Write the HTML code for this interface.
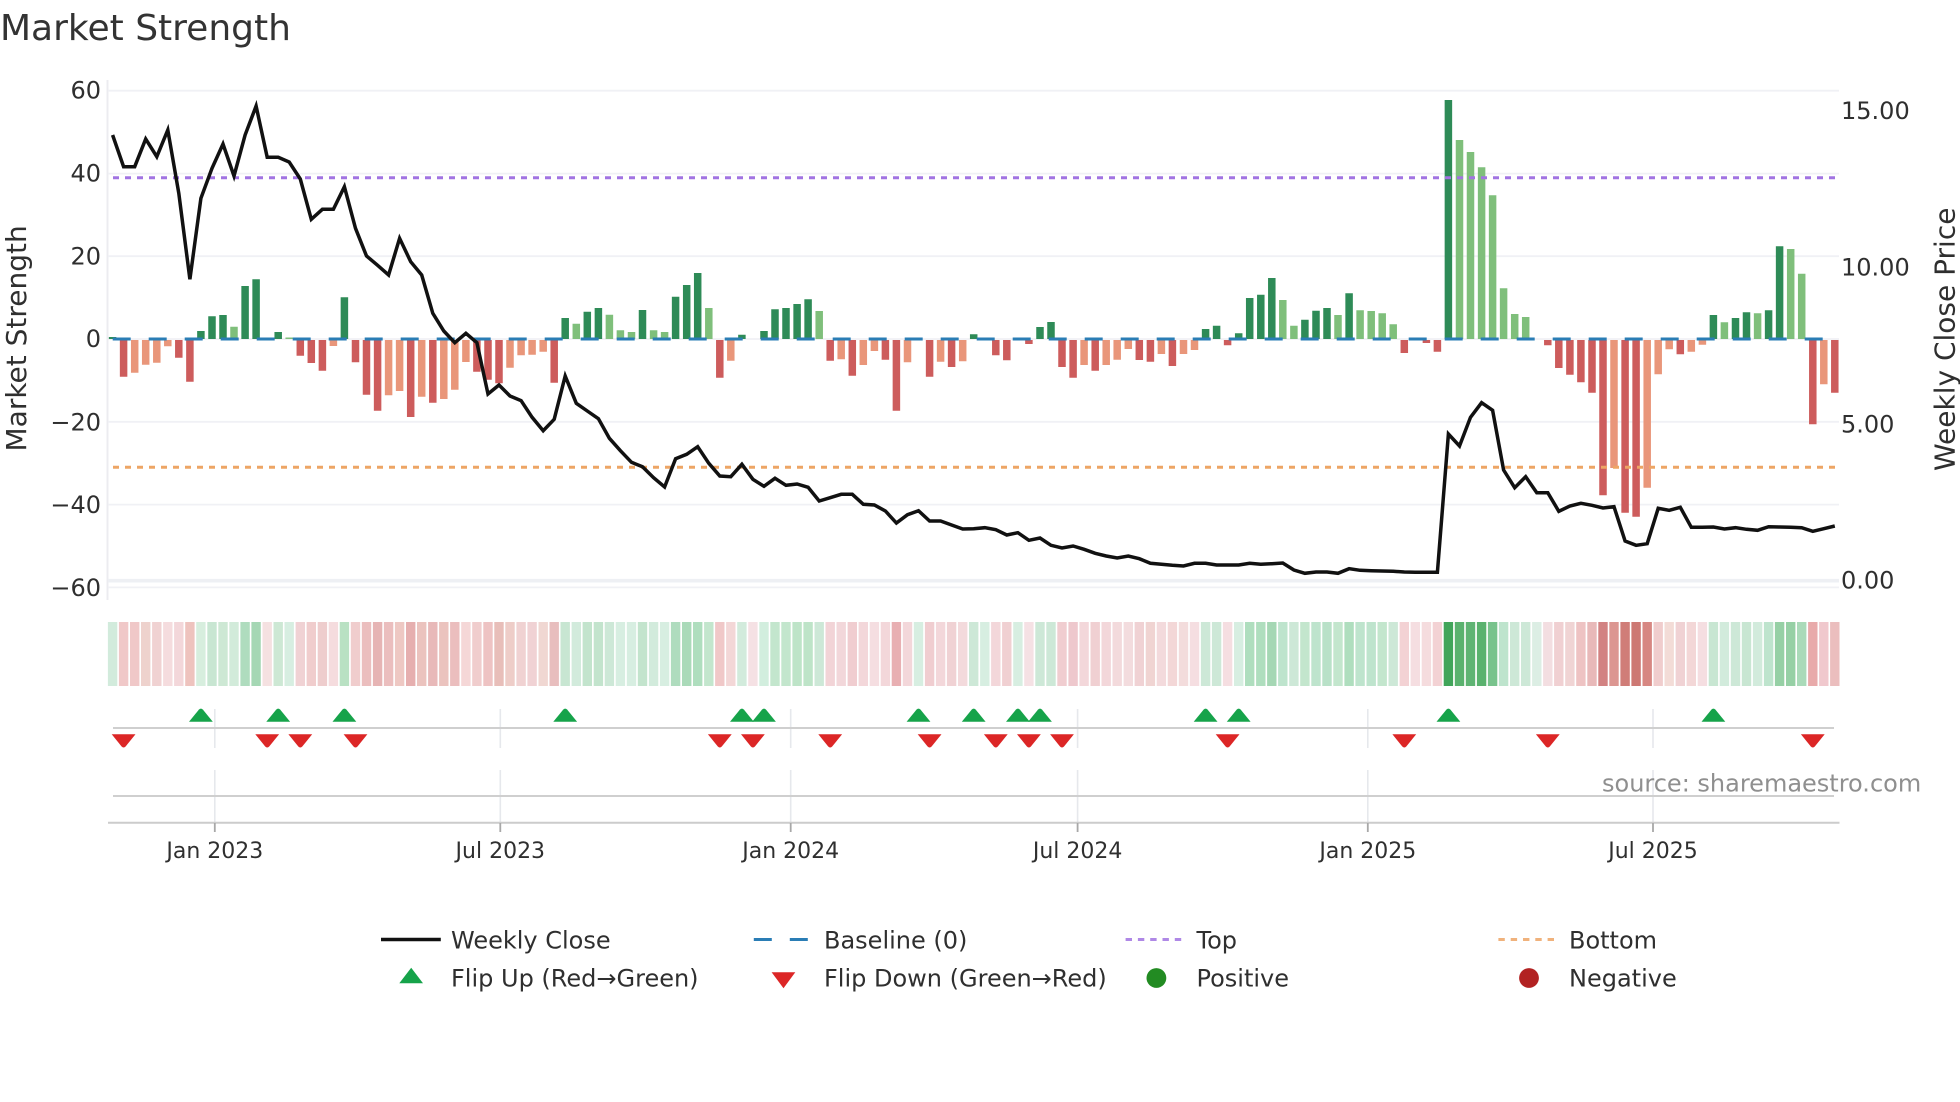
<!DOCTYPE html>
<html lang="en"><head><meta charset="utf-8"><title>Market Strength</title>
<style>
html,body{margin:0;padding:0;background:#fff;width:1960px;height:1102px;overflow:hidden}
svg{display:block}
text{font-family:"DejaVu Sans","Liberation Sans",sans-serif;fill:#2f2f2f}
.yt{font-size:24px;text-anchor:end}
.rt{font-size:24px}
.xt{font-size:22px;text-anchor:middle}
.lg{font-size:24px}
</style></head><body>
<svg width="1960" height="1102" viewBox="0 0 1960 1102" xmlns="http://www.w3.org/2000/svg">
<defs>
<path id="u" d="M-11.9 721.7L-2 709.6Q0 707.6 2 709.6L11.9 721.7Z" fill="#16a34a"/>
<path id="d" d="M-11.9 734.3H11.9L2 746.5Q0 748.4-2 746.5Z" fill="#dc2626"/>
</defs>
<text x="0" y="40" style="font-size:36px;fill:#333">Market Strength</text>
<!-- grid -->
<path d="M107.5 80V600" stroke="#ececf0" stroke-width="2" fill="none"/>
<path d="M108 90.7H1839M108 173.6H1839M108 256.2H1839M108 339H1839M108 421.8H1839M108 504.6H1839M108 587.4H1839" stroke="#f0f1f5" stroke-width="1.8" fill="none"/>
<path d="M108 580.7H1839" stroke="#eef0f4" stroke-width="3.6" fill="none"/>
<!-- bars -->
<g fill="none" stroke-width="7.5">
<path stroke="#2e8b57" d="M112.6 339V337M200.9 339V331M212 339V316.3M223 339V315M245.1 339V286M256.1 339V279.3M278.2 339V332M344.4 339V297.3M565.2 339V318M587.3 339V311.7M598.4 339V308M642.5 339V310M675.6 339V296.7M686.7 339V285M697.7 339V273M741.9 339V334.7M764 339V331M775 339V309.3M786 339V308M797.1 339V304M808.1 339V299.3M973.7 339V334.3M1017.9 339V337.5M1040 339V327M1051 339V322M1205.6 339V329M1216.6 339V325.7M1238.7 339V333.3M1249.7 339V298M1260.8 339V294.7M1271.8 339V278M1304.9 339V319.7M1316 339V310.7M1327 339V308M1349.1 339V293.3M1448.4 339V100M1713.4 339V315M1735.5 339V318M1746.5 339V312.3M1768.6 339V310.3M1779.6 339V246.3"/>
<path stroke="#7fbf7b" d="M234 339V326.7M289.2 339V337.5M576.3 339V323.7M609.4 339V314.7M620.4 339V330.3M631.5 339V332M653.6 339V330.3M664.6 339V332M708.8 339V308M819.2 339V311M1282.8 339V300M1293.9 339V325.7M1338 339V315M1360.1 339V310.3M1371.2 339V311M1382.2 339V313.3M1393.2 339V324.3M1459.5 339V140M1470.5 339V152M1481.6 339V167.3M1492.6 339V195.3M1503.6 339V288.3M1514.7 339V314M1525.7 339V317M1724.4 339V322.3M1757.6 339V313.3M1790.7 339V249M1801.7 339V273.7"/>
<path stroke="#cd5c5c" d="M123.6 340V376.7M178.8 340V357.7M189.9 340V381.7M300.3 340V355.7M311.3 340V363M322.4 340V370.7M355.5 340V362.3M366.5 340V394.7M377.6 340V410.7M410.7 340V417M432.8 340V402.7M476.9 340V371.7M488 340V379.7M499 340V383.3M554.2 340V382.7M719.8 340V377.7M830.2 340V360.7M852.3 340V375.7M885.4 340V359.7M896.4 340V410.7M929.6 340V376.7M951.6 340V367M995.8 340V355.3M1006.8 340V360.3M1028.9 340V344M1062 340V367M1073.1 340V377.7M1095.2 340V370.7M1139.3 340V360M1150.4 340V361.7M1172.4 340V366M1227.6 340V345.3M1404.3 340V353M1426.4 340V343M1437.4 340V351.7M1547.8 340V345.3M1558.8 340V368M1569.9 340V374.7M1580.9 340V382.3M1592 340V392.7M1603 340V495.3M1625.1 340V512.7M1636.1 340V516.7M1680.3 340V354.3M1812.8 340V424.3M1834.8 340V392.7"/>
<path stroke="#e9967a" d="M134.7 340V372.7M145.7 340V364.7M156.8 340V362.7M167.8 340V346.3M333.4 340V346M388.6 340V395.3M399.6 340V391M421.7 340V396.7M443.8 340V399M454.8 340V389.7M465.9 340V362M510 340V367.7M521.1 340V355.3M532.1 340V354.7M543.2 340V351.7M730.8 340V360.7M841.2 340V359.3M863.3 340V365M874.4 340V351M907.5 340V362.3M940.6 340V361.7M962.7 340V361.3M1084.1 340V365M1106.2 340V365M1117.2 340V359.7M1128.3 340V349M1161.4 340V354M1183.5 340V354M1194.5 340V350M1614 340V468M1647.2 340V487.7M1658.2 340V374.3M1669.2 340V349.3M1691.3 340V351.7M1702.4 340V344.7M1823.8 340V384.3"/>
</g>
<!-- reference lines -->
<path d="M112.7 339H1834" stroke="#2a7db5" stroke-width="3" stroke-dasharray="18 18" fill="none"/>
<path d="M113 177.8H1835" stroke="#a173e2" stroke-width="3" stroke-dasharray="6 6" fill="none"/>
<path d="M113 467.3H1835" stroke="#eda565" stroke-width="3" stroke-dasharray="6 6" fill="none"/>
<!-- price -->
<polyline fill="none" stroke="#111" stroke-width="3.5" stroke-linejoin="miter" points="112.6,135 123.6,166.7 134.7,166.7 145.7,139 156.8,156.7 167.8,130 178.8,193.3 189.9,279.3 200.9,198.3 212,168.3 223,144 234,176 245.1,135 256.1,106 267.2,157.3 278.2,157.3 289.2,162 300.3,179 311.3,219.3 322.4,209.3 333.4,209.3 344.4,186.7 355.5,228.3 366.5,256 377.6,265.3 388.6,275 399.6,238.3 410.7,261.7 421.7,275 432.8,313.3 443.8,331 454.8,342.7 465.9,333.3 476.9,342.7 488,394 499,385 510,396 521.1,400.7 532.1,417.3 543.2,430.7 554.2,419.3 565.2,376 576.3,403.3 587.3,411 598.4,418.7 609.4,438.3 620.4,450.7 631.5,462.3 642.5,466.7 653.6,477.7 664.6,487 675.6,458.7 686.7,454.3 697.7,446.7 708.8,463.3 719.8,476 730.8,476.7 741.9,464.3 752.9,479.3 764,486.3 775,478.3 786,485.3 797.1,484 808.1,487.3 819.2,501 830.2,497.7 841.2,494.3 852.3,494.3 863.3,504.3 874.4,505 885.4,511 896.4,523 907.5,514.7 918.5,510.7 929.6,521 940.6,521 951.6,525 962.7,529 973.7,528.7 984.8,527.7 995.8,529.7 1006.8,535 1017.9,532.7 1028.9,540.3 1040,538 1051,545.3 1062,548 1073.1,546 1084.1,549.3 1095.2,553.3 1106.2,556 1117.2,558 1128.3,556 1139.3,558.7 1150.4,563.3 1161.4,564.3 1172.4,565.3 1183.5,566 1194.5,563.3 1205.6,563.3 1216.6,565 1227.6,565 1238.7,565 1249.7,563.3 1260.8,564.3 1271.8,563.7 1282.8,563 1293.9,570 1304.9,573.3 1316,572 1327,572 1338,573.3 1349.1,568.7 1360.1,570.3 1371.2,570.7 1382.2,571 1393.2,571.3 1404.3,572 1415.3,572.3 1426.4,572.3 1437.4,572.3 1448.4,434 1459.5,446 1470.5,417.3 1481.6,402.7 1492.6,410.3 1503.6,470 1514.7,487.7 1525.7,476.7 1536.8,492.7 1547.8,492.7 1558.8,511.3 1569.9,506 1580.9,503.3 1592,505.3 1603,508 1614,506.7 1625.1,541 1636.1,545.3 1647.2,543.7 1658.2,508.3 1669.2,510.3 1680.3,507.3 1691.3,527.3 1702.4,527.3 1713.4,527 1724.4,529 1735.5,527.7 1746.5,529.3 1757.6,530.3 1768.6,526.7 1779.6,527 1790.7,527.3 1801.7,527.7 1812.8,531.3 1823.8,528.7 1834.8,526"/>
<!-- y ticks -->
<text class="yt" x="101" y="98.6">60</text>
<text class="yt" x="101" y="181.6">40</text>
<text class="yt" x="101" y="264.4">20</text>
<text class="yt" x="101" y="347.2">0</text>
<text class="yt" x="101" y="430.4">−20</text>
<text class="yt" x="101" y="513.2">−40</text>
<text class="yt" x="101" y="596">−60</text>
<text class="rt" x="1841" y="119">15.00</text>
<text class="rt" x="1841" y="275.3">10.00</text>
<text class="rt" x="1841" y="432.3">5.00</text>
<text class="rt" x="1841" y="588.3">0.00</text>
<text transform="translate(26 451.5) rotate(-90)" style="font-size:28px">Market Strength</text>
<text transform="translate(1954.5 471) rotate(-90)" style="font-size:28px">Weekly Close Price</text>
<!-- heat strip -->
<g fill="none" stroke-width="9.4">
<path stroke="#d2ebdc" d="M112.6 622v64"/><path stroke="#f0c8c8" d="M123.6 622v64"/><path stroke="#f0c8c8" d="M134.7 622v64"/><path stroke="#eed2cd" d="M145.7 622v64"/><path stroke="#f0d2d2" d="M156.8 622v64"/><path stroke="#f5dcde" d="M167.8 622v64"/><path stroke="#f3d7da" d="M178.8 622v64"/><path stroke="#eec3be" d="M189.9 622v64"/><path stroke="#d7eede" d="M200.9 622v64"/><path stroke="#c8e6d2" d="M212 622v64"/>
<path stroke="#cde8d4" d="M223 622v64"/><path stroke="#d2ebda" d="M234 622v64"/><path stroke="#afdcbe" d="M245.1 622v64"/><path stroke="#a5d7b4" d="M256.1 622v64"/><path stroke="#f5e1e1" d="M267.2 622v64"/><path stroke="#cde8d4" d="M278.2 622v64"/><path stroke="#d7eee1" d="M289.2 622v64"/><path stroke="#f0d2d4" d="M300.3 622v64"/><path stroke="#f0cdcd" d="M311.3 622v64"/><path stroke="#eecdcd" d="M322.4 622v64"/>
<path stroke="#f5dcde" d="M333.4 622v64"/><path stroke="#b9e1c3" d="M344.4 622v64"/><path stroke="#f0cdcd" d="M355.5 622v64"/><path stroke="#ebbebe" d="M366.5 622v64"/><path stroke="#e6b4b4" d="M377.6 622v64"/><path stroke="#ebbebe" d="M388.6 622v64"/><path stroke="#eec8c3" d="M399.6 622v64"/><path stroke="#e6afaf" d="M410.7 622v64"/><path stroke="#ebc3be" d="M421.7 622v64"/><path stroke="#e8b9b9" d="M432.8 622v64"/>
<path stroke="#ebc3be" d="M443.8 622v64"/><path stroke="#ebbebe" d="M454.8 622v64"/><path stroke="#f5d7d7" d="M465.9 622v64"/><path stroke="#f0cdcd" d="M476.9 622v64"/><path stroke="#eec3c3" d="M488 622v64"/><path stroke="#e8beb9" d="M499 622v64"/><path stroke="#eecdc8" d="M510 622v64"/><path stroke="#f0d2d2" d="M521.1 622v64"/><path stroke="#f0d2d4" d="M532.1 622v64"/><path stroke="#f0d7d2" d="M543.2 622v64"/>
<path stroke="#e8bebe" d="M554.2 622v64"/><path stroke="#c8e6d2" d="M565.2 622v64"/><path stroke="#d2ebdc" d="M576.3 622v64"/><path stroke="#c3e4cd" d="M587.3 622v64"/><path stroke="#c3e4cd" d="M598.4 622v64"/><path stroke="#cde8d7" d="M609.4 622v64"/><path stroke="#d7eee1" d="M620.4 622v64"/><path stroke="#d7eee1" d="M631.5 622v64"/><path stroke="#c3e4cd" d="M642.5 622v64"/><path stroke="#d2ebdc" d="M653.6 622v64"/>
<path stroke="#d7eee1" d="M664.6 622v64"/><path stroke="#afdcbe" d="M675.6 622v64"/><path stroke="#aadab9" d="M686.7 622v64"/><path stroke="#afdebe" d="M697.7 622v64"/><path stroke="#c3e6cd" d="M708.8 622v64"/><path stroke="#f0c8c8" d="M719.8 622v64"/><path stroke="#f3d7d7" d="M730.8 622v64"/><path stroke="#d2ebdc" d="M741.9 622v64"/><path stroke="#f5e1e4" d="M752.9 622v64"/><path stroke="#d2eede" d="M764 622v64"/>
<path stroke="#c3e6cd" d="M775 622v64"/><path stroke="#c3e6cd" d="M786 622v64"/><path stroke="#bee4c8" d="M797.1 622v64"/><path stroke="#bee4c8" d="M808.1 622v64"/><path stroke="#cde8d7" d="M819.2 622v64"/><path stroke="#f2d4d7" d="M830.2 622v64"/><path stroke="#f2d7da" d="M841.2 622v64"/><path stroke="#f0cdd0" d="M852.3 622v64"/><path stroke="#f3d7da" d="M863.3 622v64"/><path stroke="#f5dee1" d="M874.4 622v64"/>
<path stroke="#f3d7da" d="M885.4 622v64"/><path stroke="#e8afb2" d="M896.4 622v64"/><path stroke="#f3d7da" d="M907.5 622v64"/><path stroke="#d7eee1" d="M918.5 622v64"/><path stroke="#f0cdd0" d="M929.6 622v64"/><path stroke="#f3d7da" d="M940.6 622v64"/><path stroke="#f0d2d4" d="M951.6 622v64"/><path stroke="#f3dadc" d="M962.7 622v64"/><path stroke="#cde8d7" d="M973.7 622v64"/><path stroke="#d7eee1" d="M984.8 622v64"/>
<path stroke="#f3d7da" d="M995.8 622v64"/><path stroke="#f0d0d2" d="M1006.8 622v64"/><path stroke="#d7eee1" d="M1017.9 622v64"/><path stroke="#f5e1e4" d="M1028.9 622v64"/><path stroke="#cde8d7" d="M1040 622v64"/><path stroke="#cde8d7" d="M1051 622v64"/><path stroke="#f0cdd0" d="M1062 622v64"/><path stroke="#eec8cd" d="M1073.1 622v64"/><path stroke="#f3d7da" d="M1084.1 622v64"/><path stroke="#f0d0d2" d="M1095.2 622v64"/>
<path stroke="#f3d7da" d="M1106.2 622v64"/><path stroke="#f3dadc" d="M1117.2 622v64"/><path stroke="#f3dcde" d="M1128.3 622v64"/><path stroke="#f0d2d4" d="M1139.3 622v64"/><path stroke="#f0d4d2" d="M1150.4 622v64"/><path stroke="#f3dadc" d="M1161.4 622v64"/><path stroke="#f3d7d7" d="M1172.4 622v64"/><path stroke="#f3dcdc" d="M1183.5 622v64"/><path stroke="#f5dee1" d="M1194.5 622v64"/><path stroke="#cde8d7" d="M1205.6 622v64"/>
<path stroke="#cde8d7" d="M1216.6 622v64"/><path stroke="#f5dee1" d="M1227.6 622v64"/><path stroke="#d7eee1" d="M1238.7 622v64"/><path stroke="#afdebe" d="M1249.7 622v64"/><path stroke="#afdebe" d="M1260.8 622v64"/><path stroke="#a5d7b4" d="M1271.8 622v64"/><path stroke="#bee4cd" d="M1282.8 622v64"/><path stroke="#cde8d7" d="M1293.9 622v64"/><path stroke="#c3e6cd" d="M1304.9 622v64"/><path stroke="#bee4cd" d="M1316 622v64"/>
<path stroke="#b9e1c8" d="M1327 622v64"/><path stroke="#c3e6cd" d="M1338 622v64"/><path stroke="#afdebe" d="M1349.1 622v64"/><path stroke="#bee4cd" d="M1360.1 622v64"/><path stroke="#bee4cd" d="M1371.2 622v64"/><path stroke="#c3e6cd" d="M1382.2 622v64"/><path stroke="#cde8d7" d="M1393.2 622v64"/><path stroke="#f3d2d4" d="M1404.3 622v64"/><path stroke="#f5dee1" d="M1415.3 622v64"/><path stroke="#f5dcde" d="M1426.4 622v64"/>
<path stroke="#f3d2d4" d="M1437.4 622v64"/><path stroke="#41a55a" d="M1448.4 622v64"/><path stroke="#5ab26e" d="M1459.5 622v64"/><path stroke="#5fb473" d="M1470.5 622v64"/><path stroke="#5ab26e" d="M1481.6 622v64"/><path stroke="#78c38c" d="M1492.6 622v64"/><path stroke="#bee4cd" d="M1503.6 622v64"/><path stroke="#cde8d7" d="M1514.7 622v64"/><path stroke="#cde8d7" d="M1525.7 622v64"/><path stroke="#dceee4" d="M1536.8 622v64"/>
<path stroke="#f3dee1" d="M1547.8 622v64"/><path stroke="#f0d0d2" d="M1558.8 622v64"/><path stroke="#f0d4d4" d="M1569.9 622v64"/><path stroke="#eec3c3" d="M1580.9 622v64"/><path stroke="#e8b9b9" d="M1592 622v64"/><path stroke="#d28282" d="M1603 622v64"/><path stroke="#dc9691" d="M1614 622v64"/><path stroke="#d07d78" d="M1625.1 622v64"/><path stroke="#cd7873" d="M1636.1 622v64"/><path stroke="#d78782" d="M1647.2 622v64"/>
<path stroke="#f0cdcd" d="M1658.2 622v64"/><path stroke="#f3dcd7" d="M1669.2 622v64"/><path stroke="#f0d2d4" d="M1680.3 622v64"/><path stroke="#f3d7d7" d="M1691.3 622v64"/><path stroke="#f5dee1" d="M1702.4 622v64"/><path stroke="#c8e6d2" d="M1713.4 622v64"/><path stroke="#d2ebdc" d="M1724.4 622v64"/><path stroke="#cde8d7" d="M1735.5 622v64"/><path stroke="#c8e6d2" d="M1746.5 622v64"/><path stroke="#d2ebdc" d="M1757.6 622v64"/>
<path stroke="#bee4cd" d="M1768.6 622v64"/><path stroke="#96d0a5" d="M1779.6 622v64"/><path stroke="#96d0a5" d="M1790.7 622v64"/><path stroke="#aadab9" d="M1801.7 622v64"/><path stroke="#e8aaaa" d="M1812.8 622v64"/><path stroke="#f0c8cd" d="M1823.8 622v64"/><path stroke="#ebbebe" d="M1834.8 622v64"/>
</g>
<!-- flip track -->
<path d="M214.8 709V748M214.8 770V823M500.3 709V748M500.3 770V823M790.7 709V748M790.7 770V823M1077.6 709V748M1077.6 770V823M1367.8 709V748M1367.8 770V823M1653 709V748M1653 770V823" stroke="#e6e8ec" stroke-width="1.6" fill="none"/>
<path d="M113 728H1834M113 796H1834" stroke="#cfcfcf" stroke-width="2" fill="none"/>
<path d="M108 822.7H1839.5" stroke="#cccccc" stroke-width="2" fill="none"/>
<path d="M214.8 823V832M500.3 823V832M790.7 823V832M1077.6 823V832M1367.8 823V832M1653 823V832" stroke="#a8a8a8" stroke-width="1.8" fill="none"/>
<use href="#u" x="200.9"/><use href="#u" x="278.2"/><use href="#u" x="344.4"/><use href="#u" x="565.2"/><use href="#u" x="741.9"/><use href="#u" x="764"/><use href="#u" x="918.5"/><use href="#u" x="973.7"/><use href="#u" x="1017.9"/><use href="#u" x="1040"/><use href="#u" x="1205.6"/><use href="#u" x="1238.7"/><use href="#u" x="1448.4"/><use href="#u" x="1713.4"/>
<use href="#d" x="123.6"/><use href="#d" x="267.2"/><use href="#d" x="300.3"/><use href="#d" x="355.5"/><use href="#d" x="719.8"/><use href="#d" x="752.9"/><use href="#d" x="830.2"/><use href="#d" x="929.6"/><use href="#d" x="995.8"/><use href="#d" x="1028.9"/><use href="#d" x="1062"/><use href="#d" x="1227.6"/><use href="#d" x="1404.3"/><use href="#d" x="1547.8"/><use href="#d" x="1812.8"/>
<text x="1602" y="791.7" style="font-size:24px;fill:#8f8f8f">source: sharemaestro.com</text>
<!-- x ticks -->
<text class="xt" x="214.8" y="858">Jan 2023</text>
<text class="xt" x="500.3" y="858">Jul 2023</text>
<text class="xt" x="790.7" y="858">Jan 2024</text>
<text class="xt" x="1077.6" y="858">Jul 2024</text>
<text class="xt" x="1367.8" y="858">Jan 2025</text>
<text class="xt" x="1653" y="858">Jul 2025</text>
<!-- legend -->
<path d="M381 939.5H440.8" stroke="#111" stroke-width="3.6" fill="none"/>
<path d="M753.8 939.5H808" stroke="#2a7db5" stroke-width="3" stroke-dasharray="18 18" fill="none"/>
<path d="M1125.6 939.5H1181.4" stroke="#a173e2" stroke-width="3" stroke-dasharray="6.4 5.9" fill="none" opacity=".85"/>
<path d="M1498.4 939.5H1554.2" stroke="#eda565" stroke-width="3" stroke-dasharray="6.4 5.9" fill="none" opacity=".85"/>
<path d="M399.3 983.3L411.2 967.7L423 983.3Z" fill="#16a34a"/>
<path d="M771.6 972.3H795.3L783.5 988.3Z" fill="#dc2626"/>
<ellipse cx="1156.4" cy="978" rx="9.9" ry="9.9" fill="#228b22"/>
<ellipse cx="1529" cy="978" rx="9.9" ry="9.9" fill="#b22222"/>
<text class="lg" x="451" y="948.3">Weekly Close</text>
<text class="lg" x="824" y="948.3">Baseline (0)</text>
<text class="lg" x="1196.5" y="948.3">Top</text>
<text class="lg" x="1569" y="948.3">Bottom</text>
<text class="lg" x="451" y="986.7">Flip Up (Red→Green)</text>
<text class="lg" x="824" y="986.7">Flip Down (Green→Red)</text>
<text class="lg" x="1196.5" y="986.7">Positive</text>
<text class="lg" x="1569" y="986.7">Negative</text>
</svg>
</body></html>
